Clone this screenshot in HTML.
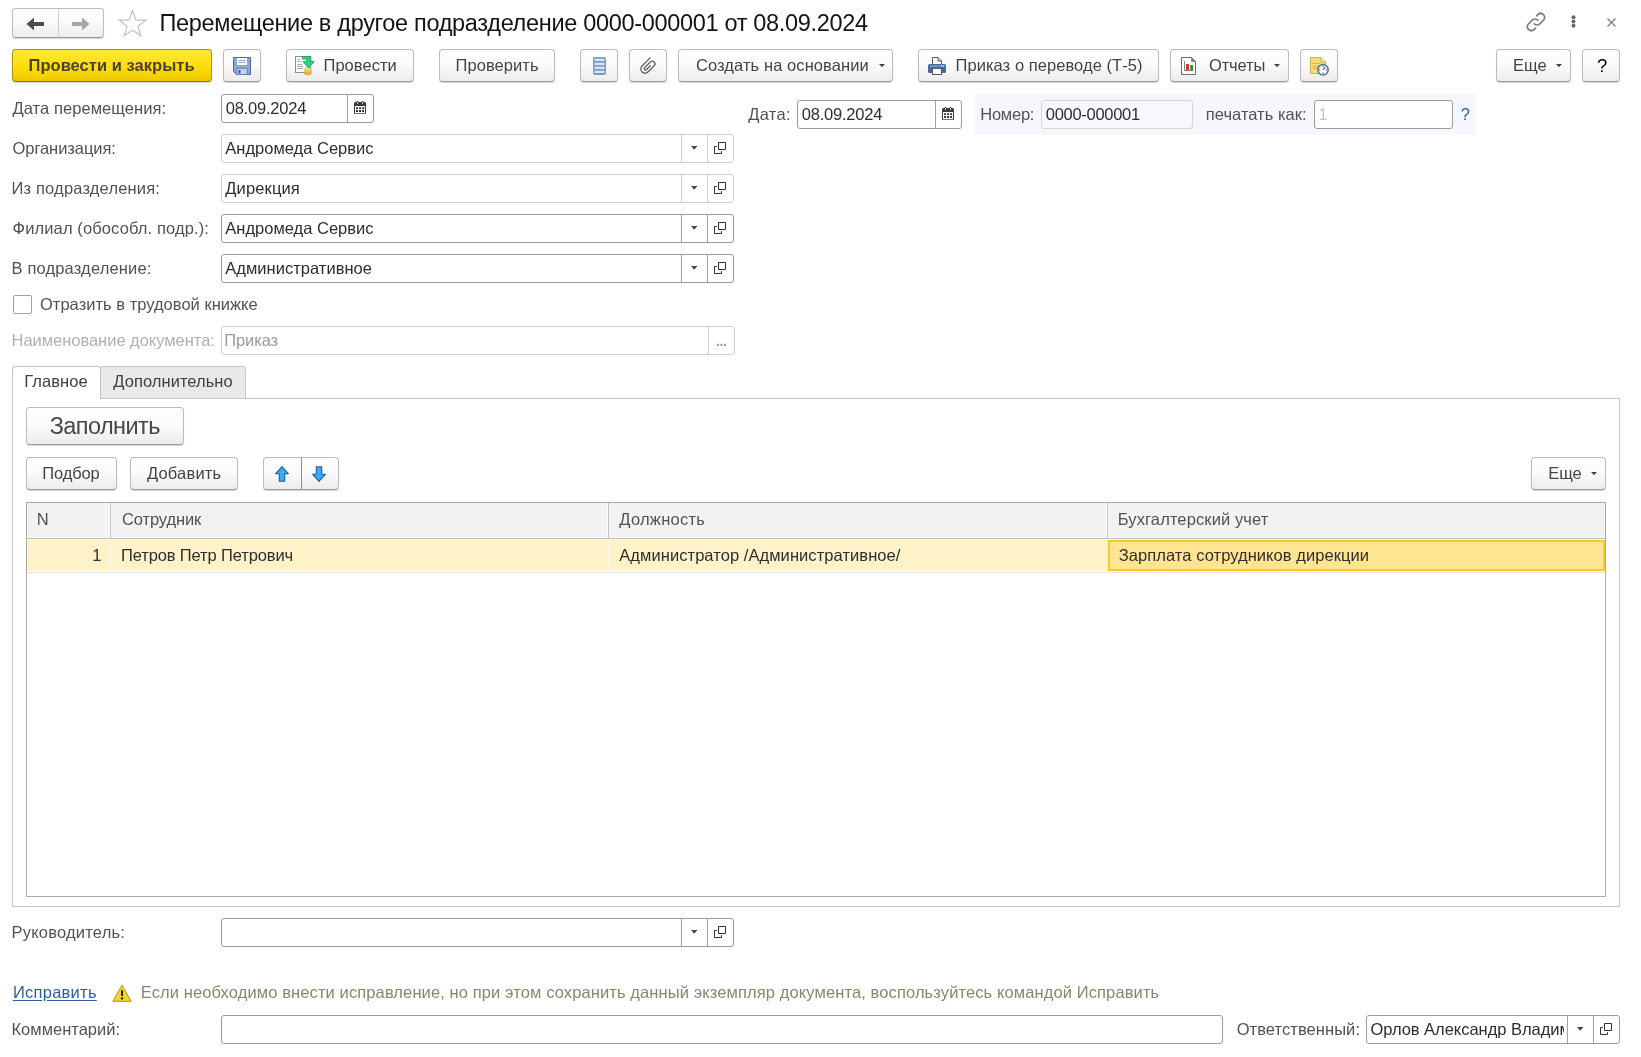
<!DOCTYPE html>
<html lang="ru"><head><meta charset="utf-8"><title>Перемещение в другое подразделение</title>
<style>
html,body{margin:0;padding:0;background:#fff;}
body{width:1641px;height:1057px;overflow:hidden;font-family:"Liberation Sans",Arial,sans-serif;}
#app{will-change:transform;position:relative;width:1641px;height:1057px;overflow:hidden;background:#fff;}
#app>*{position:absolute;box-sizing:border-box;}
.t{white-space:pre;}
.btn{border:1px solid #bcbcbc;border-bottom-color:#9c9c9c;border-radius:4px;background:linear-gradient(#ffffff 0%,#fbfbfb 45%,#ececec 100%);box-shadow:0 1px 1px rgba(0,0,0,.18);}
.btn.y{border-color:#ad9308;border-bottom-color:#927c00;background:linear-gradient(#ffe838 0%,#ffdf0a 50%,#efc900 100%);}
.inp{border:1px solid #9c9c9c;border-radius:3px;background:#fff;}
.inp.l{border-color:#cfcfcf;}
.inp.g{border-color:#d6d6d6;background:#f7f8fb;}
.vd{width:1px;background:#a0a0a0;}
.vd.l{background:#cfcfcf;}

</style></head><body>
<div id="app">
<div class="btn" style="left:12px;top:8px;width:92px;height:30px"></div>
<div class="vd" style="left:58px;top:9px;height:28px;background:#cfcfcf"></div>
<svg style="left:26px;top:16.6px" width="19" height="14" viewBox="0 0 19 14"><path d="M0.5 7L8 0.5V5H18V9H8V13.5z" fill="#4d4d4d"/></svg>
<svg style="left:71px;top:16.6px" width="19" height="14" viewBox="0 0 19 14"><path d="M18.5 7L11 0.5V5H1V9H11V13.5z" fill="#a6a6a6"/></svg>
<svg style="left:117px;top:9px" width="31" height="29" viewBox="0 0 31 29"><path d="M15.5 1.5l3.4 9.6h10.1l-8.1 6.1 3 9.8-8.4-5.9-8.4 5.9 3-9.8-8.1-6.1h10.1z" fill="#fff" stroke="#bdbdbd" stroke-width="1.1" stroke-linejoin="miter"/></svg>
<span class="t " style="left:159.50px;top:8.06px;font-size:23.5px;line-height:30px;color:#141414;letter-spacing:-0.317px;">Перемещение в другое подразделение 0000-000001 от 08.09.2024</span>
<svg style="left:1525px;top:11px" width="22" height="22" viewBox="0 0 22 22" fill="none" stroke="#7d7d7d" stroke-width="1.7" stroke-linecap="round"><path d="M9.2 12.8a4 4 0 0 0 5.6 0l4-4a4 4 0 0 0-5.6-5.6l-1.6 1.6"/><path d="M12.8 9.2a4 4 0 0 0-5.6 0l-4 4a4 4 0 0 0 5.6 5.6l1.6-1.6"/></svg>
<svg style="left:1571px;top:15px" width="5" height="13" viewBox="0 0 5 13"><circle cx="2.5" cy="2.3" r="2" fill="#666"/><circle cx="2.5" cy="6.5" r="2" fill="#666"/><circle cx="2.5" cy="10.7" r="2" fill="#666"/></svg>
<svg style="left:1606.5px;top:17.5px" width="9" height="9" viewBox="0 0 9 9" stroke="#808080" stroke-width="1.3"><path d="M0.5 0.5l8 8M8.5 0.5l-8 8"/></svg>
<div class="btn y" style="left:12px;top:49px;width:200px;height:33px"></div>
<span class="t " style="left:28.50px;top:54.78px;font-size:16.5px;line-height:20px;color:#4a4030;letter-spacing:0.042px;font-weight:bold;">Провести и закрыть</span>
<div class="btn " style="left:223px;top:49px;width:38px;height:33px"></div>
<svg style="left:233px;top:57px" width="18" height="18" viewBox="0 0 18 18"><path d="M0.5 0.5h17v17H3.5l-3-3z" fill="#8aa7d6" stroke="#4a6a9e"/><rect x="4" y="1" width="10" height="7" fill="#fff"/><path d="M5.5 3.5h7M5.5 5.5h7" stroke="#8aa7d6"/><rect x="4" y="11.5" width="10" height="6" fill="#c9d6ea" stroke="#4a6a9e" stroke-width=".6"/><rect x="5.5" y="13" width="2" height="3.5" fill="#3c5a8a"/></svg>
<div class="btn " style="left:286px;top:49px;width:128px;height:33px"></div>
<svg style="left:295px;top:56px" width="20" height="20" viewBox="0 0 20 20"><rect x="0.5" y="0.5" width="15" height="16" fill="#fff" stroke="#8b9096"/><path d="M2.2 3.5h3M2.2 5.5h4M2.2 8.5h5M2.2 10.5h6M2.2 12.5h6" stroke="#9aa0a6" stroke-width=".9"/><ellipse cx="13" cy="17.3" rx="3.7" ry="1.6" fill="#e9c43c" stroke="#c09a1c" stroke-width=".6"/><ellipse cx="13" cy="15.3" rx="3.7" ry="1.6" fill="#f2d458" stroke="#c09a1c" stroke-width=".6"/><ellipse cx="13" cy="13.3" rx="3.7" ry="1.6" fill="#f8e486" stroke="#c9a628" stroke-width=".6"/><path d="M7.4 0.4H15.8V5.6H19.2L13.5 12 8 5.6H11.6V3H7.4z" fill="#2fd086" stroke="#1a9c5c" stroke-width=".8" stroke-linejoin="round"/></svg>
<span class="t " style="left:323.50px;top:54.78px;font-size:16.5px;line-height:20px;color:#444;letter-spacing:0.032px;">Провести</span>
<div class="btn " style="left:439px;top:49px;width:116px;height:33px"></div>
<span class="t " style="left:455.50px;top:54.78px;font-size:16.5px;line-height:20px;color:#444;letter-spacing:0.073px;">Проверить</span>
<div class="btn " style="left:580px;top:49px;width:38px;height:33px"></div>
<svg style="left:593px;top:57px" width="13" height="18" viewBox="0 0 13 18"><rect x="0" y="0" width="13" height="18" rx="2" fill="#7b9cc0"/><path d="M1.5 2.9h10M1.5 6.9h10M1.5 10.9h10M1.5 14.9h10" stroke="#d3e6f9" stroke-width="2.1"/></svg>
<div class="btn " style="left:629px;top:49px;width:38px;height:33px"></div>
<svg style="left:636.9px;top:54.7px" width="22" height="22" viewBox="-11 -11 22 22" fill="none" stroke="#5a5a5a" stroke-width="1.2" stroke-linecap="round"><path transform="rotate(45)" d="M-4.2 -7.2V4.25A4.2 4.2 0 0 0 4.2 4.25V-4.5A2.7 2.7 0 0 0 -1.2 -4.5V3.6A1.3 1.3 0 0 0 1.4 3.6V-1.8"/></svg>
<div class="btn " style="left:678px;top:49px;width:215px;height:33px"></div>
<span class="t " style="left:696.00px;top:54.78px;font-size:16.5px;line-height:20px;color:#444;letter-spacing:0.081px;">Создать на основании</span>
<svg style="position:absolute;left:878.5px;top:63.9px" width="6" height="3.2" viewBox="0 0 6 3.2"><path d="M0 0h6L3.0 3.2z" fill="#444"/></svg>
<div class="btn " style="left:918px;top:49px;width:241px;height:33px"></div>
<svg style="left:928px;top:57px" width="18" height="18" viewBox="0 0 18 18"><path d="M4.5 7.5V0.5H10L13.5 4V7.5z" fill="#fff" stroke="#5a5a5a"/><path d="M10 0.5V4H13.5" fill="none" stroke="#5a5a5a"/><rect x="0" y="7" width="18" height="9" rx="1.6" fill="#41699a"/><rect x="1.5" y="8" width="15" height="2.2" rx="1" fill="#6a90ba"/><rect x="13" y="8.3" width="1.2" height="1.2" fill="#d8ecff"/><rect x="15" y="8.3" width="1.2" height="1.2" fill="#d8ecff"/><rect x="4.5" y="11.5" width="9" height="6" fill="#fff" stroke="#5a5a5a"/></svg>
<span class="t " style="left:955.50px;top:54.78px;font-size:16.5px;line-height:20px;color:#444;letter-spacing:0.058px;">Приказ о переводе (Т-5)</span>
<div class="btn " style="left:1170px;top:49px;width:119px;height:33px"></div>
<svg style="left:1181px;top:57px" width="15" height="18" viewBox="0 0 15 18"><path d="M0.5 0.5H10.5L14.5 4.5V17.5H0.5z" fill="#fff" stroke="#6b6b6b"/><path d="M10.5 0.5V4.5H14.5z" fill="#808080" stroke="#6b6b6b" stroke-width=".6"/><path d="M3.5 4V13.5H12.5" fill="none" stroke="#777" stroke-width=".9"/><rect x="5" y="7" width="3" height="6.2" fill="#d23a2c"/><rect x="9.2" y="8" width="2.8" height="5.2" fill="#3a8e2a"/></svg>
<span class="t " style="left:1209.00px;top:54.78px;font-size:16.5px;line-height:20px;color:#444;letter-spacing:-0.135px;">Отчеты</span>
<svg style="position:absolute;left:1274.0px;top:63.9px" width="6" height="3.2" viewBox="0 0 6 3.2"><path d="M0 0h6L3.0 3.2z" fill="#444"/></svg>
<div class="btn " style="left:1300px;top:49px;width:38px;height:33px"></div>
<svg style="left:1310px;top:56.8px" width="20" height="20" viewBox="0 0 20 20"><path d="M0.5 0.5H11L15.5 5V16.5H0.5z" fill="#f4dc7e" stroke="#cfb352"/><path d="M11 0.5V5H15.5" fill="#f9eaa8" stroke="#cfb352"/><path d="M2.5 6.5h8M2.5 9.2h6M2.5 11.5h5" stroke="#c9a944" stroke-width=".9"/><circle cx="13" cy="12.8" r="5.2" fill="#fff" stroke="#3f7f8a" stroke-width="1.5"/><path d="M13 8.6v1.4M13 15.6v1.4M8.8 12.8h1.4M15.8 12.8h1.4" stroke="#c04a90" stroke-width="1.3"/><path d="M13 12.8L15 10.3" stroke="#5a7ad0" stroke-width="1.6"/></svg>
<div class="btn " style="left:1496px;top:49px;width:75px;height:33px"></div>
<span class="t " style="left:1513.00px;top:54.78px;font-size:16.5px;line-height:20px;color:#444;letter-spacing:0.052px;">Еще</span>
<svg style="position:absolute;left:1556.0px;top:63.9px" width="6" height="3.2" viewBox="0 0 6 3.2"><path d="M0 0h6L3.0 3.2z" fill="#444"/></svg>
<div class="btn " style="left:1582px;top:49px;width:38px;height:33px"></div>
<span class="t " style="left:1597.00px;top:56.09px;font-size:18.5px;line-height:20px;color:#000;">?</span>
<span class="t " style="left:12.50px;top:98.03px;font-size:16.5px;line-height:20px;color:#525252;letter-spacing:0.066px;">Дата перемещения:</span>
<div class="inp " style="left:221px;top:94px;width:153px;height:29px"></div>
<div class="vd" style="left:347px;top:95px;height:27px"></div>
<span class="t " style="left:225.70px;top:98.03px;font-size:16.5px;line-height:20px;color:#2e2e2e;letter-spacing:-0.212px;">08.09.2024</span>
<svg style="left:354px;top:100.8px" width="12" height="13.4" viewBox="0 0 12 13.4"><rect x="0" y="1" width="12" height="12.3" rx="1.5" fill="#3c3c3c"/><rect x="1" y="5" width="10" height="7.3" fill="#fff"/><rect x="2.4" y="0" width="2.2" height="3.8" rx="1.1" fill="#3c3c3c"/><rect x="7.5" y="0" width="2.2" height="3.8" rx="1.1" fill="#3c3c3c"/><rect x="3.05" y="0.9" width=".9" height="2.1" rx=".45" fill="#fff"/><rect x="8.15" y="0.9" width=".9" height="2.1" rx=".45" fill="#fff"/><path d="M2.1 6.2h1.9v1.8H2.1zM5.1 6.2h1.9v1.8H5.1zM8.2 6.2h1.9v1.8H8.2zM2.1 9.1h1.9v1.8H2.1zM5.1 9.1h1.9v1.8H5.1zM8.2 9.1h1.9v1.8H8.2z" fill="#2a2a2a"/></svg>
<span class="t " style="left:12.50px;top:138.03px;font-size:16.5px;line-height:20px;color:#525252;letter-spacing:-0.065px;">Организация:</span>
<div class="inp l" style="left:221px;top:134px;width:513px;height:29px"></div>
<div class="vd l" style="left:681px;top:135px;height:27px"></div>
<div class="vd l" style="left:707px;top:135px;height:27px"></div>
<svg style="position:absolute;left:690.8px;top:146.05px" width="6.4" height="3.7" viewBox="0 0 6.4 3.7"><path d="M0 0h6.4L3.2 3.7z" fill="#444"/></svg>
<svg style="position:absolute;left:714px;top:142px" width="12" height="12" viewBox="0 0 12 12" fill="none" stroke="#333" stroke-width="1"><path d="M4.5 0.5h7v7h-7z"/><path d="M2.7 4.5H0.5v7h7V9.3"/></svg>
<span class="t " style="left:225.30px;top:138.03px;font-size:16.5px;line-height:20px;color:#2e2e2e;letter-spacing:0.007px;">Андромеда Сервис</span>
<span class="t " style="left:11.50px;top:178.03px;font-size:16.5px;line-height:20px;color:#525252;letter-spacing:0.17px;">Из подразделения:</span>
<div class="inp l" style="left:221px;top:174px;width:513px;height:29px"></div>
<div class="vd l" style="left:681px;top:175px;height:27px"></div>
<div class="vd l" style="left:707px;top:175px;height:27px"></div>
<svg style="position:absolute;left:690.8px;top:186.05px" width="6.4" height="3.7" viewBox="0 0 6.4 3.7"><path d="M0 0h6.4L3.2 3.7z" fill="#444"/></svg>
<svg style="position:absolute;left:714px;top:182px" width="12" height="12" viewBox="0 0 12 12" fill="none" stroke="#333" stroke-width="1"><path d="M4.5 0.5h7v7h-7z"/><path d="M2.7 4.5H0.5v7h7V9.3"/></svg>
<span class="t " style="left:225.30px;top:178.03px;font-size:16.5px;line-height:20px;color:#2e2e2e;letter-spacing:0.124px;">Дирекция</span>
<span class="t " style="left:12.50px;top:218.03px;font-size:16.5px;line-height:20px;color:#525252;letter-spacing:0.12px;">Филиал (обособл. подр.):</span>
<div class="inp " style="left:221px;top:214px;width:513px;height:29px"></div>
<div class="vd " style="left:681px;top:215px;height:27px"></div>
<div class="vd " style="left:707px;top:215px;height:27px"></div>
<svg style="position:absolute;left:690.8px;top:226.05px" width="6.4" height="3.7" viewBox="0 0 6.4 3.7"><path d="M0 0h6.4L3.2 3.7z" fill="#444"/></svg>
<svg style="position:absolute;left:714px;top:222px" width="12" height="12" viewBox="0 0 12 12" fill="none" stroke="#333" stroke-width="1"><path d="M4.5 0.5h7v7h-7z"/><path d="M2.7 4.5H0.5v7h7V9.3"/></svg>
<span class="t " style="left:225.30px;top:218.03px;font-size:16.5px;line-height:20px;color:#2e2e2e;letter-spacing:0.007px;">Андромеда Сервис</span>
<span class="t " style="left:11.50px;top:258.03px;font-size:16.5px;line-height:20px;color:#525252;letter-spacing:0.16px;">В подразделение:</span>
<div class="inp " style="left:221px;top:254px;width:513px;height:29px"></div>
<div class="vd " style="left:681px;top:255px;height:27px"></div>
<div class="vd " style="left:707px;top:255px;height:27px"></div>
<svg style="position:absolute;left:690.8px;top:266.04999999999995px" width="6.4" height="3.7" viewBox="0 0 6.4 3.7"><path d="M0 0h6.4L3.2 3.7z" fill="#444"/></svg>
<svg style="position:absolute;left:714px;top:262px" width="12" height="12" viewBox="0 0 12 12" fill="none" stroke="#333" stroke-width="1"><path d="M4.5 0.5h7v7h-7z"/><path d="M2.7 4.5H0.5v7h7V9.3"/></svg>
<span class="t " style="left:225.30px;top:258.03px;font-size:16.5px;line-height:20px;color:#2e2e2e;letter-spacing:0.023px;">Административное</span>
<span class="t " style="left:748.30px;top:104.28px;font-size:16.5px;line-height:20px;color:#525252;letter-spacing:0.291px;">Дата:</span>
<div class="inp " style="left:797px;top:100px;width:165px;height:29px"></div>
<div class="vd" style="left:935px;top:101px;height:27px"></div>
<span class="t " style="left:801.70px;top:104.28px;font-size:16.5px;line-height:20px;color:#2e2e2e;letter-spacing:-0.2px;">08.09.2024</span>
<svg style="left:942px;top:106.8px" width="12" height="13.4" viewBox="0 0 12 13.4"><rect x="0" y="1" width="12" height="12.3" rx="1.5" fill="#3c3c3c"/><rect x="1" y="5" width="10" height="7.3" fill="#fff"/><rect x="2.4" y="0" width="2.2" height="3.8" rx="1.1" fill="#3c3c3c"/><rect x="7.5" y="0" width="2.2" height="3.8" rx="1.1" fill="#3c3c3c"/><rect x="3.05" y="0.9" width=".9" height="2.1" rx=".45" fill="#fff"/><rect x="8.15" y="0.9" width=".9" height="2.1" rx=".45" fill="#fff"/><path d="M2.1 6.2h1.9v1.8H2.1zM5.1 6.2h1.9v1.8H5.1zM8.2 6.2h1.9v1.8H8.2zM2.1 9.1h1.9v1.8H2.1zM5.1 9.1h1.9v1.8H5.1zM8.2 9.1h1.9v1.8H8.2z" fill="#2a2a2a"/></svg>
<div style="left:975px;top:94px;width:501px;height:41px;background:#f5f7fc"></div>
<span class="t " style="left:980.30px;top:104.28px;font-size:16.5px;line-height:20px;color:#525252;letter-spacing:-0.258px;">Номер:</span>
<div class="inp g" style="left:1041px;top:100px;width:152px;height:29px"></div>
<span class="t " style="left:1045.80px;top:104.28px;font-size:16.5px;line-height:20px;color:#2e2e2e;letter-spacing:-0.288px;">0000-000001</span>
<span class="t " style="left:1205.80px;top:104.28px;font-size:16.5px;line-height:20px;color:#525252;letter-spacing:0.027px;">печатать как:</span>
<div class="inp " style="left:1314px;top:100px;width:139px;height:29px"></div>
<span class="t " style="left:1318.50px;top:104.28px;font-size:16.5px;line-height:20px;color:#c6c6c6;">1</span>
<span class="t " style="left:1460.80px;top:103.88px;font-size:16.5px;line-height:20px;color:#2b5f9e;">?</span>
<div style="left:13px;top:295px;width:19px;height:19px;border:1px solid #a2a2a2;border-radius:2px;background:#fff"></div>
<span class="t " style="left:40.00px;top:294.28px;font-size:16.5px;line-height:20px;color:#525252;letter-spacing:0.019px;">Отразить в трудовой книжке</span>
<span class="t " style="left:11.50px;top:330.08px;font-size:16.5px;line-height:20px;color:#b0b0b0;letter-spacing:-0.028px;">Наименование документа:</span>
<div class="inp l" style="left:221px;top:326px;width:514px;height:29px"></div>
<div class="vd l" style="left:708px;top:327px;height:27px"></div>
<span class="t " style="left:224.30px;top:330.08px;font-size:16.5px;line-height:20px;color:#9a9a9a;letter-spacing:-0.125px;">Приказ</span>
<span class="t " style="left:716.00px;top:331.15px;font-size:14px;line-height:20px;color:#9a9a9a;letter-spacing:-0.39px;font-weight:bold;">...</span>
<div style="left:12px;top:398px;width:1608px;height:509px;border:1px solid #c3c3c3;background:#fff"></div>
<div style="left:100px;top:366px;width:146px;height:33px;border:1px solid #c8c8c8;border-radius:3px 3px 0 0;background:#e9e9e9"></div>
<div style="left:12px;top:366px;width:89px;height:33px;border:1px solid #c3c3c3;border-bottom:none;border-radius:3px 3px 0 0;background:#fff"></div>
<span class="t " style="left:24.30px;top:370.78px;font-size:16.5px;line-height:20px;color:#404040;letter-spacing:0.056px;">Главное</span>
<span class="t " style="left:113.30px;top:370.78px;font-size:16.5px;line-height:20px;color:#404040;letter-spacing:0.052px;">Дополнительно</span>
<div class="btn " style="left:26px;top:407px;width:158px;height:38px"></div>
<span class="t " style="left:49.70px;top:410.86px;font-size:23.5px;line-height:30px;color:#474747;letter-spacing:-0.565px;">Заполнить</span>
<div class="btn " style="left:26px;top:457px;width:91px;height:33px"></div>
<span class="t " style="left:42.30px;top:462.78px;font-size:16.5px;line-height:20px;color:#444;letter-spacing:-0.146px;">Подбор</span>
<div class="btn " style="left:130px;top:457px;width:108px;height:33px"></div>
<span class="t " style="left:147.00px;top:462.78px;font-size:16.5px;line-height:20px;color:#444;letter-spacing:0.168px;">Добавить</span>
<div class="btn " style="left:263px;top:457px;width:76px;height:33px"></div>
<div class="vd" style="left:301px;top:458px;height:31px;background:#8e8e8e"></div>
<svg style="left:275px;top:466px" width="14" height="16" viewBox="0 0 14 16"><path d="M7 0.7L13.3 7.7H9.7V15.3H4.3V7.7H0.7z" fill="#3fa9f5" stroke="#1c5c98" stroke-width="1.1" stroke-linejoin="round"/></svg>
<svg style="left:312px;top:466px" width="14" height="16" viewBox="0 0 14 16"><path d="M7 15.3L13.3 8.3H9.7V0.7H4.3V8.3H0.7z" fill="#3fa9f5" stroke="#1c5c98" stroke-width="1.1" stroke-linejoin="round"/></svg>
<div class="btn " style="left:1531px;top:457px;width:75px;height:33px"></div>
<span class="t " style="left:1548.30px;top:462.78px;font-size:16.5px;line-height:20px;color:#444;letter-spacing:-0.098px;">Еще</span>
<svg style="position:absolute;left:1591.0px;top:471.9px" width="6" height="3.2" viewBox="0 0 6 3.2"><path d="M0 0h6L3.0 3.2z" fill="#444"/></svg>
<div style="left:26px;top:502px;width:1580px;height:395px;border:1px solid #a9a9a9;background:#fff"></div>
<div style="left:27px;top:503px;width:1578px;height:35px;background:#f2f2f2;border-bottom:1px solid #f8f8f8"></div>
<div style="left:27px;top:538px;width:1578px;height:1px;background:#c2c2bc"></div>
<div style="left:109px;top:503px;width:1px;height:35px;background:#fdfdfd"></div>
<div style="left:110px;top:503px;width:1px;height:35px;background:#c6c6c6"></div>
<div style="left:607px;top:503px;width:1px;height:35px;background:#fdfdfd"></div>
<div style="left:608px;top:503px;width:1px;height:35px;background:#c6c6c6"></div>
<div style="left:1106px;top:503px;width:1px;height:35px;background:#fdfdfd"></div>
<div style="left:1107px;top:503px;width:1px;height:35px;background:#c6c6c6"></div>
<span class="t " style="left:36.70px;top:509.08px;font-size:16.5px;line-height:20px;color:#525252;">N</span>
<span class="t " style="left:122.00px;top:509.08px;font-size:16.5px;line-height:20px;color:#525252;letter-spacing:-0.117px;">Сотрудник</span>
<span class="t " style="left:619.30px;top:509.08px;font-size:16.5px;line-height:20px;color:#525252;letter-spacing:0.258px;">Должность</span>
<span class="t " style="left:1117.80px;top:509.08px;font-size:16.5px;line-height:20px;color:#525252;letter-spacing:0.111px;">Бухгалтерский учет</span>
<div style="left:27px;top:539px;width:1578px;height:32px;background:#fff2c8;border-top:1px solid #fff7dc;border-bottom:1px solid #fff7dc"></div>
<div style="left:27px;top:572px;width:1578px;height:1px;background:#e6e6de"></div>
<div style="left:110px;top:539px;width:1px;height:32px;background:#fffaea"></div>
<div style="left:608px;top:539px;width:1px;height:32px;background:#fffaea"></div>
<div style="left:1108px;top:540px;width:1497px;height:31px;width:497px;background:#ffe58f;border:2px solid #f4ca30"></div>
<span class="t " style="left:92.20px;top:545.28px;font-size:16.5px;line-height:20px;color:#2e2e2e;">1</span>
<span class="t " style="left:121.00px;top:545.28px;font-size:16.5px;line-height:20px;color:#2e2e2e;letter-spacing:-0.128px;">Петров Петр Петрович</span>
<span class="t " style="left:619.30px;top:545.28px;font-size:16.5px;line-height:20px;color:#2e2e2e;letter-spacing:0.063px;">Администратор /Административное/</span>
<span class="t " style="left:1118.80px;top:545.28px;font-size:16.5px;line-height:20px;color:#2e2e2e;letter-spacing:0.061px;">Зарплата сотрудников дирекции</span>
<span class="t " style="left:11.50px;top:922.28px;font-size:16.5px;line-height:20px;color:#525252;letter-spacing:0.208px;">Руководитель:</span>
<div class="inp " style="left:221px;top:918px;width:513px;height:29px"></div>
<div class="vd " style="left:681px;top:919px;height:27px"></div>
<div class="vd " style="left:707px;top:919px;height:27px"></div>
<svg style="position:absolute;left:690.8px;top:930.05px" width="6.4" height="3.7" viewBox="0 0 6.4 3.7"><path d="M0 0h6.4L3.2 3.7z" fill="#444"/></svg>
<svg style="position:absolute;left:714px;top:926px" width="12" height="12" viewBox="0 0 12 12" fill="none" stroke="#333" stroke-width="1"><path d="M4.5 0.5h7v7h-7z"/><path d="M2.7 4.5H0.5v7h7V9.3"/></svg>
<span class="t " style="left:12.90px;top:982.28px;font-size:16.5px;line-height:20px;color:#2f5c9c;letter-spacing:0.258px;text-decoration:underline;text-underline-offset:2px;">Исправить</span>
<svg style="left:112px;top:983.5px" width="20" height="18.5" viewBox="0 0 20 18.5"><path d="M10 1.2L19 17.3H1z" fill="#f2d634" stroke="#c8a81c" stroke-width="1.3" stroke-linejoin="round"/><path d="M10 6.3v5.6" stroke="#222" stroke-width="2"/><circle cx="10" cy="14.4" r="1.2" fill="#222"/></svg>
<span class="t " style="left:140.80px;top:981.78px;font-size:16.5px;line-height:20px;color:#8a866c;letter-spacing:0.106px;">Если необходимо внести исправление, но при этом сохранить данный экземпляр документа, воспользуйтесь командой Исправить</span>
<span class="t " style="left:11.50px;top:1018.78px;font-size:16.5px;line-height:20px;color:#525252;letter-spacing:0.007px;">Комментарий:</span>
<div class="inp " style="left:221px;top:1015px;width:1002px;height:29px"></div>
<span class="t " style="left:1236.70px;top:1018.78px;font-size:16.5px;line-height:20px;color:#525252;letter-spacing:0.066px;">Ответственный:</span>
<div class="inp " style="left:1366px;top:1015px;width:254px;height:29px"></div>
<div class="vd " style="left:1567px;top:1016px;height:27px"></div>
<div class="vd " style="left:1593px;top:1016px;height:27px"></div>
<svg style="position:absolute;left:1576.8px;top:1027.0500000000002px" width="6.4" height="3.7" viewBox="0 0 6.4 3.7"><path d="M0 0h6.4L3.2 3.7z" fill="#444"/></svg>
<svg style="position:absolute;left:1600px;top:1023px" width="12" height="12" viewBox="0 0 12 12" fill="none" stroke="#333" stroke-width="1"><path d="M4.5 0.5h7v7h-7z"/><path d="M2.7 4.5H0.5v7h7V9.3"/></svg>
<div style="left:1370px;top:1018.78px;width:193.79999999999995px;height:20px;overflow:hidden"><span class="t" style="position:absolute;left:0.50px;top:0px;font-size:16.5px;line-height:20px;color:#2e2e2e;letter-spacing:-0.028px;">Орлов Александр Владимирович</span></div>
</div>
</body></html>
